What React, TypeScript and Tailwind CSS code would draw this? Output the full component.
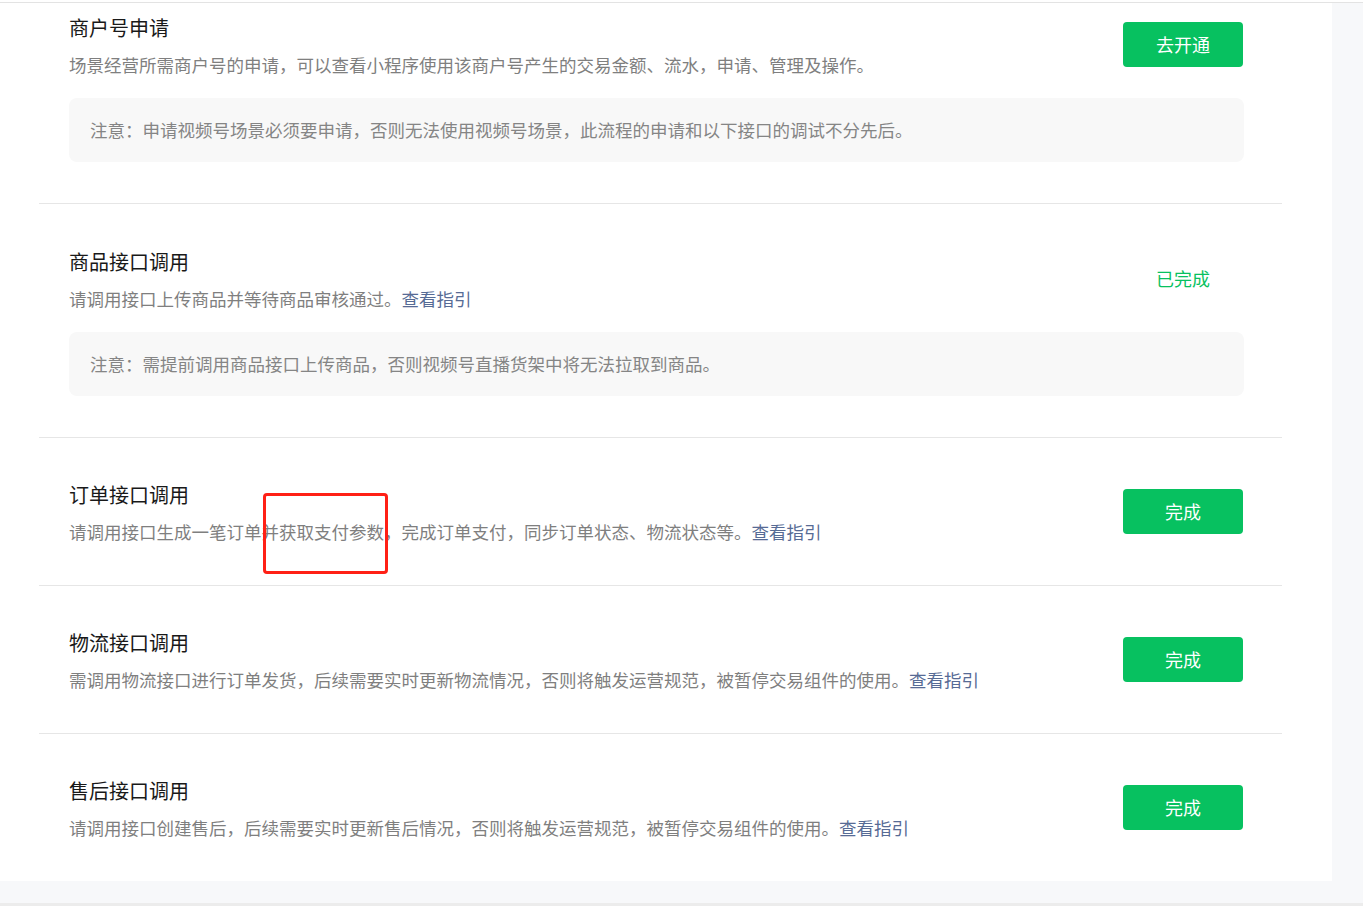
import React from "react";

type Step = {
  title: string;
  desc: React.ReactNode;
  note?: string;
  action: "button" | "done";
  label?: string;
  pt: string;
};

const Link: React.FC<{ children: React.ReactNode }> = ({ children }) => (
  <a className="cursor-pointer text-[#576b95]">{children}</a>
);

const steps: Step[] = [
  {
    title: "商户号申请",
    desc: "场景经营所需商户号的申请，可以查看小程序使用该商户号产生的交易金额、流水，申请、管理及操作。",
    note: "注意：申请视频号场景必须要申请，否则无法使用视频号场景，此流程的申请和以下接口的调试不分先后。",
    action: "button",
    label: "去开通",
    pt: "pt-[12px]",
  },
  {
    title: "商品接口调用",
    desc: (
      <>
        请调用接口上传商品并等待商品审核通过。<Link>查看指引</Link>
      </>
    ),
    note: "注意：需提前调用商品接口上传商品，否则视频号直播货架中将无法拉取到商品。",
    action: "done",
    pt: "pt-[45px]",
  },
  {
    title: "订单接口调用",
    desc: (
      <>
        请调用接口生成一笔订单并获取支付参数，完成订单支付，同步订单状态、物流状态等。<Link>查看指引</Link>
      </>
    ),
    action: "button",
    label: "完成",
    pt: "pt-[44px]",
  },
  {
    title: "物流接口调用",
    desc: (
      <>
        需调用物流接口进行订单发货，后续需要实时更新物流情况，否则将触发运营规范，被暂停交易组件的使用。<Link>查看指引</Link>
      </>
    ),
    action: "button",
    label: "完成",
    pt: "pt-[44px]",
  },
  {
    title: "售后接口调用",
    desc: (
      <>
        请调用接口创建售后，后续需要实时更新售后情况，否则将触发运营规范，被暂停交易组件的使用。<Link>查看指引</Link>
      </>
    ),
    action: "button",
    label: "完成",
    pt: "pt-[44px]",
  },
];

export default function App() {
  return (
    <div
      className="relative h-[906px] w-[1363px] overflow-hidden bg-white"
      style={{ fontFamily: '"Microsoft YaHei", "Noto Sans CJK SC", "Noto Sans", sans-serif' }}
    >
      <div className="h-[2px] bg-white" />
      <div className="h-px bg-[#e3e3e3]" />
      <div className="flex">
        <div className="w-[1332px] bg-white">
          <div className="ml-[39px] w-[1243px]">
            {steps.map((step, i) => (
              <div
                key={step.title}
                className={`pl-[30px] pr-[39px] ${step.pt} ${step.note ? "pb-[41px]" : "pb-10"} ${
                  i < steps.length - 1 ? "border-b border-[#e6e6e6]" : ""
                }`}
              >
                <div className="flex items-center">
                  <div className="flex-1">
                    <h3 className="text-[20px] leading-[26px] font-normal text-[#191919]">{step.title}</h3>
                    <p className="mt-[11px] text-[17.5px] leading-[26px] text-[#7f7f7f]">{step.desc}</p>
                  </div>
                  {step.action === "button" ? (
                    <button
                      type="button"
                      className="mb-[5px] h-[45px] w-[120px] rounded-[4px] bg-[#07c160] text-[18px] text-white"
                    >
                      {step.label}
                    </button>
                  ) : (
                    <div className="mb-[5px] w-[120px] text-center text-[18px] text-[#07c160]">已完成</div>
                  )}
                </div>
                {step.note && (
                  <div className="mt-[20px] mr-[-1px] flex h-16 items-center rounded-lg bg-[#f8f8f8] px-[21px] text-[17.5px] text-[#858585]">
                    {step.note}
                  </div>
                )}
              </div>
            ))}
          </div>
        </div>
        <div className="flex-1 bg-[#f7f8fa]" />
      </div>
      <div className="h-[22px] bg-[#f7f8fa]" />
      <div className="h-[3px] bg-[#ececec]" />

      {/* annotation box */}
      <div className="pointer-events-none absolute left-[263px] top-[493px] h-[81px] w-[125px] rounded-[4px] border-[3px] border-[#ff2016]" />
    </div>
  );
}
